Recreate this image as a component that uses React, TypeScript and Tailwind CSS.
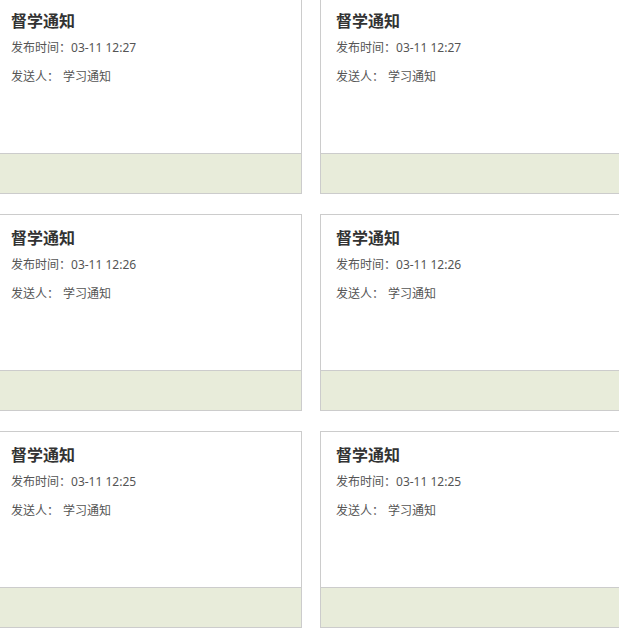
const notices = [
  { id: 1, title: '督学通知', time: '03-11 12:27', sender: '学习通知' },
  { id: 2, title: '督学通知', time: '03-11 12:27', sender: '学习通知' },
  { id: 3, title: '督学通知', time: '03-11 12:26', sender: '学习通知' },
  { id: 4, title: '督学通知', time: '03-11 12:26', sender: '学习通知' },
  { id: 5, title: '督学通知', time: '03-11 12:25', sender: '学习通知' },
  { id: 6, title: '督学通知', time: '03-11 12:25', sender: '学习通知' },
];

function NoticeCard({ title, time, sender }: { title: string; time: string; sender: string }) {
  return (
    <div className="flex flex-col h-[197px] border border-[#ccc] bg-white">
      <div className="h-[155px] px-[15px] pt-[13px]">
        <h3 className="text-[16px] leading-[20px] font-bold text-[#333]">{title}</h3>
        <p className="mt-[7px] text-[12px] leading-[20px] text-[#555]">发布时间：{time}</p>
        <p className="mt-[9px] text-[12px] leading-[20px] text-[#555]">
          发送人：<span className="ml-[4px]">{sender}</span>
        </p>
      </div>
      <div className="h-[40px] border-t border-[#ccc] bg-[#e8ecda]" />
    </div>
  );
}

export default function App() {
  return (
    <div
      className="w-[619px] h-[644px] overflow-hidden bg-white"
      style={{ fontFamily: '"Noto Sans", "Noto Sans CJK SC", sans-serif' }}
    >
      <div className="-ml-[5px] -mt-[3px] grid grid-cols-[307px_307px] gap-x-[18px] gap-y-[20px]">
        {notices.map((n) => (
          <NoticeCard key={n.id} title={n.title} time={n.time} sender={n.sender} />
        ))}
      </div>
    </div>
  );
}
